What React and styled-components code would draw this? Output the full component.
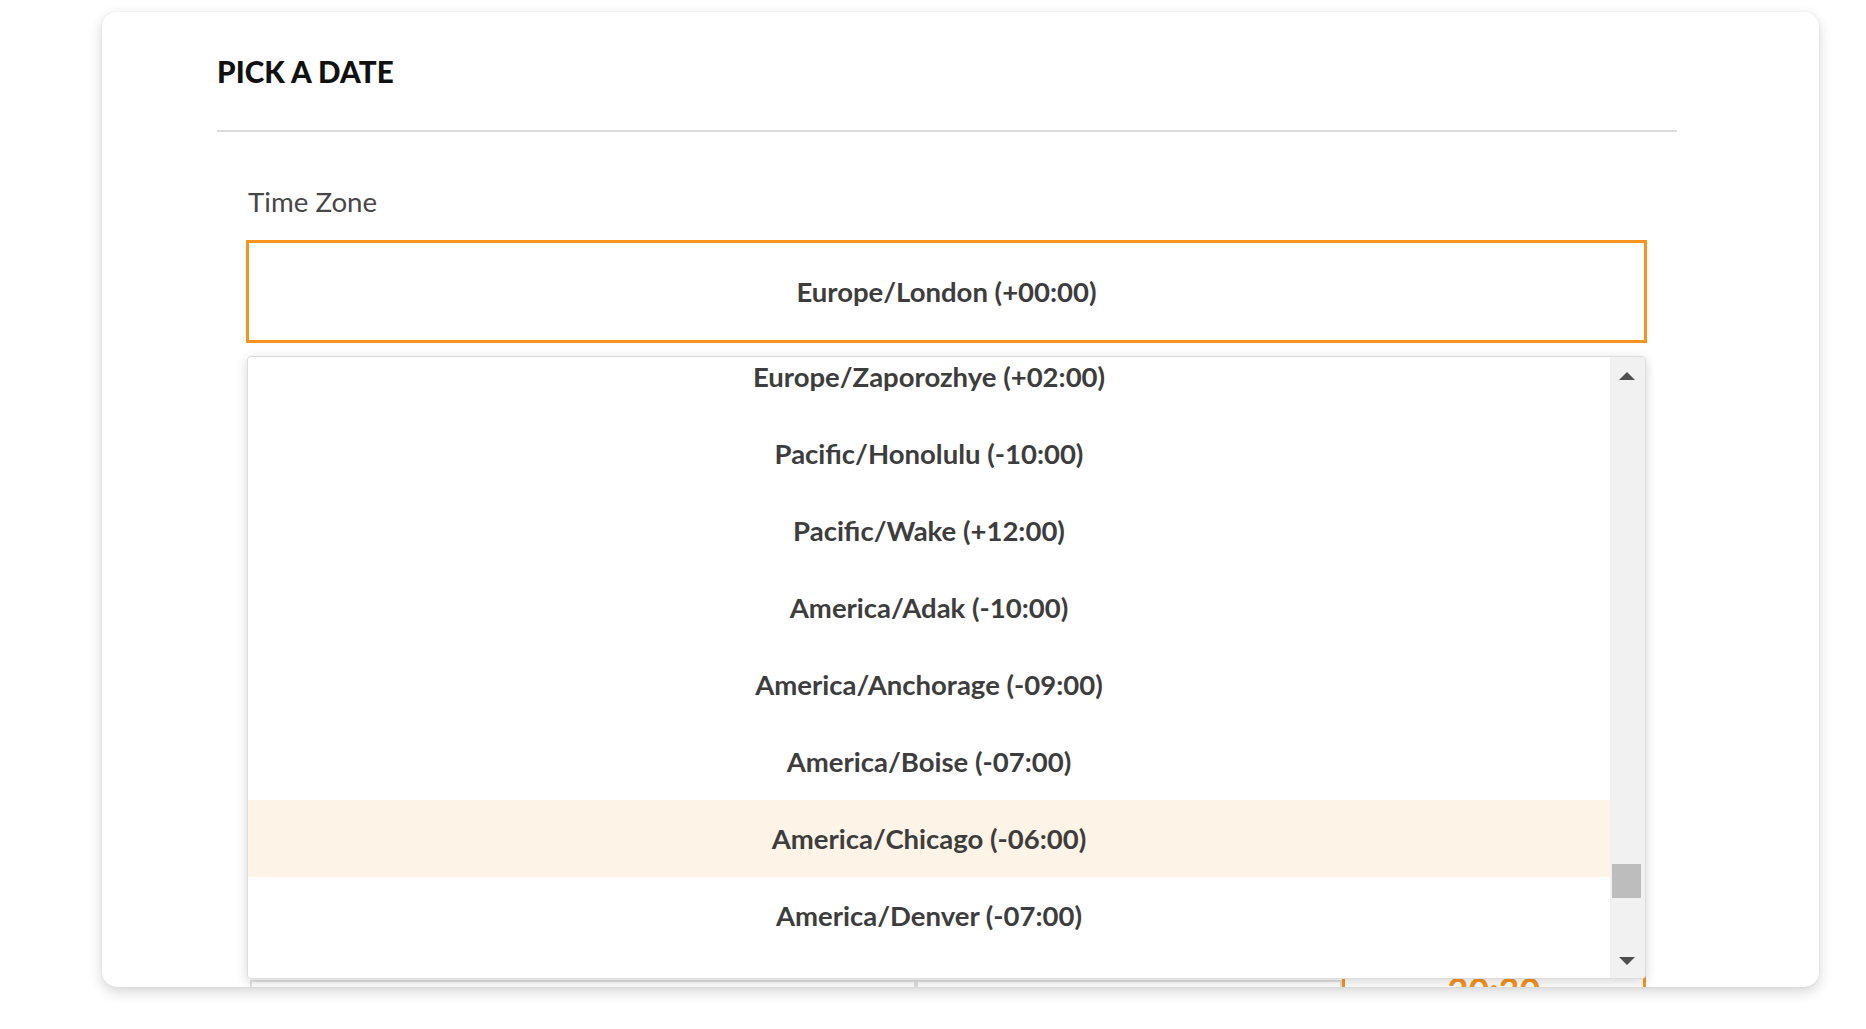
import React from "react";
import styled, { createGlobalStyle } from "styled-components";

const Global = createGlobalStyle`
  html, body { margin: 0; padding: 0; background: #ffffff; }
  body { font-family: Lato, "Liberation Sans", sans-serif; }
  * { box-sizing: border-box; }
`;

const Page = styled.div`
  height: 1029px;
  padding: 12px 0 0 102px;
  overflow: hidden;
`;

const Card = styled.section`
  width: 1717px;
  height: 975px;
  background: #ffffff;
  border-radius: 15px;
  box-shadow: 0 5px 14px rgba(0, 0, 0, 0.16), 0 0 4px rgba(0, 0, 0, 0.06);
  overflow: hidden;
  padding: 42px 142px 0 115px;
`;

const Title = styled.h1`
  margin: 0;
  font-size: 29.6px;
  line-height: 35px;
  font-weight: 900;
  color: #111111;
  letter-spacing: 0.1px;
`;

const Divider = styled.hr`
  margin: 41px 0 0;
  border: 0;
  height: 2px;
  background: #dcdcdc;
`;

const Label = styled.div`
  margin-top: 54px;
  padding-left: 31px;
  font-size: 27.7px;
  line-height: 32px;
  color: #474747;
`;

const Field = styled.div`
  position: relative;
  margin: 22px 30px 0 29px;
`;

const SelectBox = styled.div`
  height: 103px;
  border: 3px solid #f7941d;
  display: flex;
  align-items: center;
  justify-content: center;
  font-size: 27.5px;
  font-weight: 700;
  color: #3d3d3d;
`;

const ListBox = styled.div`
  position: absolute;
  top: calc(100% + 13px);
  left: 1px;
  right: 1px;
  height: 623px;
  background: #ffffff;
  border: 1px solid #dddddd;
  border-radius: 4px;
  box-shadow: 0 3px 12px rgba(0, 0, 0, 0.16);
  display: flex;
  overflow: hidden;
  z-index: 2;
`;

const Options = styled.div`
  flex: 1;
  overflow: hidden;
`;

const OptionList = styled.ul`
  list-style: none;
  margin: -19px 0 0;
  padding: 0;
`;

const Option = styled.li`
  height: 77px;
  display: flex;
  align-items: center;
  justify-content: center;
  font-size: 27.5px;
  font-weight: 700;
  color: #3d3d3d;
  background: ${(p) => (p.$active ? "#fdf3e6" : "transparent")};
`;

const ScrollBar = styled.div`
  width: 35px;
  background: #f1f1f1;
  display: flex;
  flex-direction: column;
`;

const ArrowButton = styled.div`
  height: ${(p) => p.$h}px;
  display: flex;
  align-items: center;
  justify-content: center;
  padding-right: 2px;
`;

const Triangle = styled.span`
  width: 0;
  height: 0;
  border-left: 8px solid transparent;
  border-right: 8px solid transparent;
  ${(p) =>
    p.$dir === "up"
      ? "border-bottom: 8px solid #4f4f4f;"
      : "border-top: 8px solid #4f4f4f;"}
`;

const Track = styled.div`
  flex: 1;
  padding: 0 4px 0 2px;
`;

const Thumb = styled.div`
  height: 34px;
  background: #bdbdbd;
`;

const TimeRow = styled.div`
  margin: 630px 31px 0 33px;
  display: grid;
  grid-template-columns: 666px 426px 1fr;
  align-items: start;
`;

const TimeCell = styled.div`
  height: 110px;
  margin-top: ${(p) => (p.$selected ? "0" : "7px")};
  border: ${(p) => (p.$selected ? "3px solid #f7941d" : "2px solid #e0e0e0")};
  display: flex;
  justify-content: center;
  font-size: 36px;
  font-weight: 700;
  line-height: 1;
  color: #f7941d;
`;

const TimeText = styled.span`
  margin-top: -4px;
`;

const zones = [
  "Europe/Zaporozhye (+02:00)",
  "Pacific/Honolulu (-10:00)",
  "Pacific/Wake (+12:00)",
  "America/Adak (-10:00)",
  "America/Anchorage (-09:00)",
  "America/Boise (-07:00)",
  "America/Chicago (-06:00)",
  "America/Denver (-07:00)",
  "America/Detroit (-05:00)",
];

export default function App() {
  const thumbOffset = 469;
  return (
    <>
      <Global />
      <Page>
        <Card>
          <Title>PICK A DATE</Title>
          <Divider />
          <Label>Time Zone</Label>
          <Field>
            <SelectBox>Europe/London (+00:00)</SelectBox>
            <ListBox>
              <Options>
                <OptionList>
                  {zones.map((z) => (
                    <Option key={z} $active={z === "America/Chicago (-06:00)"}>
                      {z}
                    </Option>
                  ))}
                </OptionList>
              </Options>
              <ScrollBar>
                <ArrowButton $h={38}>
                  <Triangle $dir="up" />
                </ArrowButton>
                <Track>
                  <Thumb style={{ marginTop: thumbOffset }} />
                </Track>
                <ArrowButton $h={34}>
                  <Triangle $dir="down" />
                </ArrowButton>
              </ScrollBar>
            </ListBox>
          </Field>
          <TimeRow>
            <TimeCell />
            <TimeCell />
            <TimeCell $selected>
              <TimeText>20:30</TimeText>
            </TimeCell>
          </TimeRow>
        </Card>
      </Page>
    </>
  );
}
